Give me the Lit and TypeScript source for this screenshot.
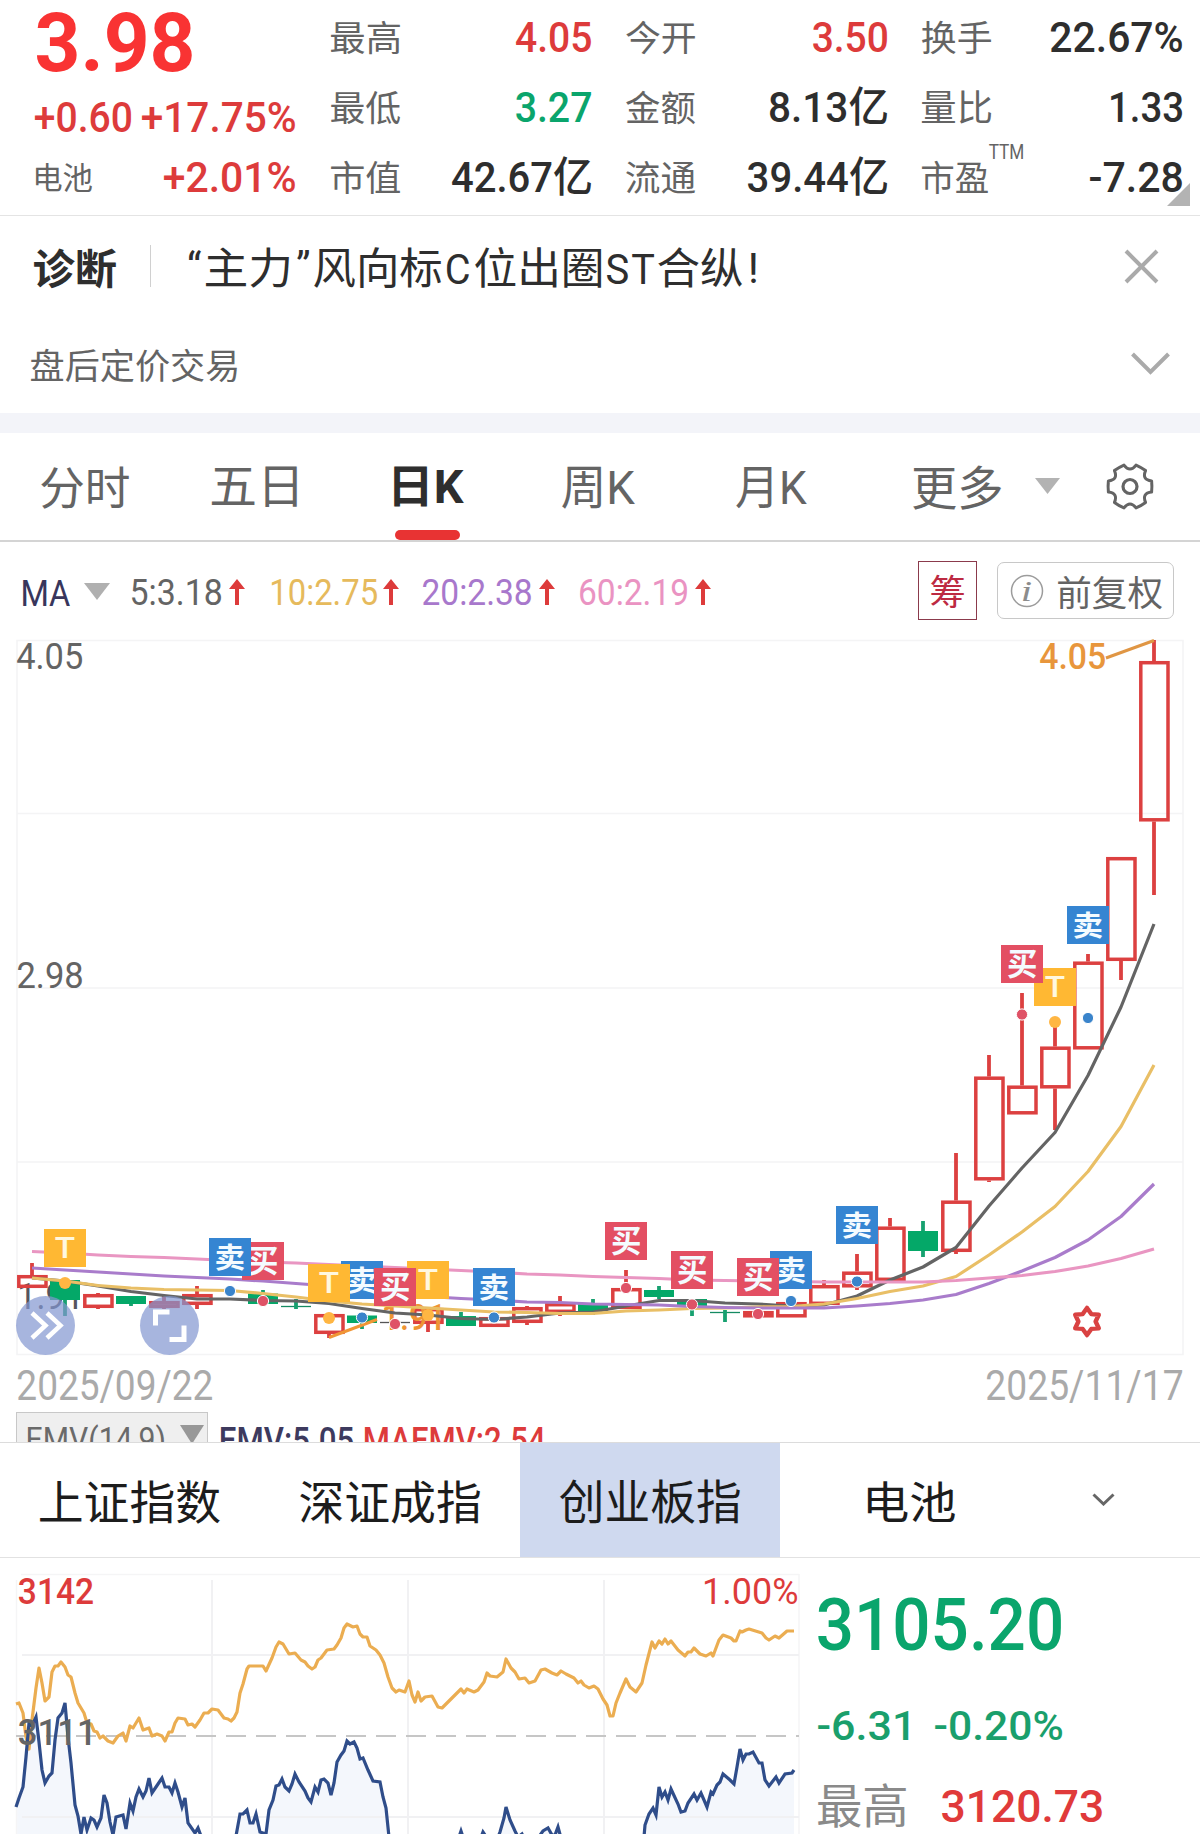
import { LitElement, html, svg, css, nothing } from "lit";
import { customElement, property } from "lit/decorators.js";

const LATIN = 'Roboto, "Noto Sans CJK SC", sans-serif';
const RED = "#dd3b3b";
const GREEN = "#0aa56c";
const DARK = "#2e2e2e";
const GRAY = "#646464";

/* ---- condensed lettering: text scaled so that its ink fills a w x h box ---- */

const ctx = document.createElement("canvas").getContext("2d")!;

function inkText(text: string, x: number, y: number, w: number, h: number, fill: string, weight = 400, style = "normal", family = LATIN) {
  ctx.font = `${style} ${weight} 200px ${family}`;
  const m = ctx.measureText(text);
  const size = (h / (m.actualBoundingBoxAscent + m.actualBoundingBoxDescent)) * 200;
  const k = size / 200;
  const sx = w / ((m.actualBoundingBoxLeft + m.actualBoundingBoxRight) * k);
  const tx = x + m.actualBoundingBoxLeft * k * sx;
  const ty = y + m.actualBoundingBoxAscent * k;
  return svg`<text transform="translate(${tx.toFixed(2)} ${ty.toFixed(2)}) scale(${sx.toFixed(4)} 1)"
    font-family=${family} font-size=${size.toFixed(2)} font-weight=${weight} font-style=${style} fill=${fill} xml:space="preserve">${text}</text>`;
}

@customElement("fit-text")
export class FitText extends LitElement {
  @property() text = "";
  @property({ type: Number }) w = 10;
  @property({ type: Number }) h = 10;
  @property() color = GRAY;
  @property({ type: Number }) weight = 400;

  static styles = css`
    :host { display: block; flex: none; }
    .box { display: block; overflow: visible; }
  `;

  render() {
    return html`<svg class="box" width=${this.w} height=${this.h}>
      ${inkText(this.text, 0, 0, this.w, this.h, this.color, this.weight)}
    </svg>`;
  }
}

const fit = (text: string, w: number, h: number, color = GRAY, weight = 400, cls = "") =>
  html`<fit-text class=${cls} .text=${text} .w=${w} .h=${h} .color=${color} .weight=${weight}></fit-text>`;

/* ------------------------------ quote header ------------------------------ */

type Stat = { label: string; lw?: number; value: string; w: number; color?: string; yi?: boolean; ttm?: boolean };

const STATS: Stat[][] = [
  [
    { label: "最高", value: "4.05", w: 75, color: RED },
    { label: "最低", value: "3.27", w: 75, color: GREEN },
    { label: "市值", value: "42.67亿", w: 139, yi: true },
  ],
  [
    { label: "今开", value: "3.50", w: 74, color: RED },
    { label: "金额", value: "8.13亿", w: 117, yi: true },
    { label: "流通", value: "39.44亿", w: 139, yi: true },
  ],
  [
    { label: "换手", value: "22.67%", w: 131 },
    { label: "量比", value: "1.33", w: 71 },
    { label: "市盈", lw: 66, value: "-7.28", w: 92, ttm: true },
  ],
];

@customElement("quote-header")
export class QuoteHeader extends LitElement {
  static styles = css`
    :host { display: block; }
    .head { position: relative; box-sizing: border-box; height: 216px; padding: 11px 18px 0 35px; display: grid;
      grid-template-columns: 296px 295px 296px 260px; border-bottom: 1px solid #e4e4e4; }
    .left { display: flex; flex-direction: column; padding-right: 36px; }
    .line { display: flex; justify-content: space-between; height: 31px; margin-top: 29px; }
    .price { margin-left: 1.5px; }
    .sector { margin: 2px 0 0 1px; }
    .col { padding: 10px 35px 0 0; }
    .col:last-of-type { padding-right: 0; }
    .row { height: 70px; display: flex; align-items: flex-start; }
    .val { margin-left: auto; }
    .yi { margin-left: auto; margin-top: -5px; }
    .ttm { margin: -16px 0 0 1px; }
    .corner { position: absolute; left: 1167px; top: 183px; }
  `;
  render() {
    return html`<div class="head">
      <div class="left">
        ${fit("3.98", 155, 61, "#f93333", 700, "price")}
        <div class="line">${fit("+0.60", 96, 31, RED, 500)}${fit("+17.75%", 153, 31, RED, 500)}</div>
        <div class="line">${fit("电池", 56, 28, GRAY, 400, "sector")}${fit("+2.01%", 131, 31, RED, 500)}</div>
      </div>
      ${STATS.map((c) => html`<div class="col">
        ${c.map((s) => html`<div class="row">
          ${fit(s.label, s.lw ?? 69, 33)}
          ${s.ttm ? fit("TTM", 34, 14, GRAY, 400, "ttm") : nothing}
          ${fit(s.value, s.w, s.yi ? 39.5 : 31, s.color ?? DARK, 500, s.yi ? "yi" : "val")}
        </div>`)}
      </div>`)}
      <svg class="corner" width="23" height="23"><path d="M23 0V23H0Z" fill="#b3b3b3"/></svg>
    </div>`;
  }
}

/* ------------------------------- notice rows ------------------------------ */

@customElement("notice-rows")
export class NoticeRows extends LitElement {
  static styles = css`
    :host { display: block; }
    .diag { box-sizing: border-box; height: 104px; display: flex; align-items: center; padding: 0 41px 0 34px; }
    .bar { width: 1px; height: 42px; background: #d0d0d0; margin: -4px 37px 0 34px; }
    .after { height: 93px; display: flex; align-items: center; padding: 0 30px 2px 31px; box-sizing: border-box; }
    .msg { display: flex; align-items: center; }
    .q1 { margin: -27px 5px 0 1px; }
    .q2 { margin: -27px 5px 0 8px; }
    .lat { margin: 1px 6px 0 6px; }
    .s { margin: 1px 4px 0 6px; }
    .t { margin: 1px 4px 0 0; }
    .bang { margin-left: 9px; }
    .x { margin: -3px 0 0 auto; }
    .v { margin: -4px 0 0 auto; }
    .band { height: 20px; background: #f3f4f9; }
  `;
  render() {
    return html`
      <div class="diag">
        ${fit("诊断", 82, 40, DARK, 700)}
        <div class="bar"></div>
        <div class="msg">
          ${fit("“", 12, 10, DARK, 400, "q1")}${fit("主力", 83, 40, DARK)}${fit("”", 12, 10, DARK, 400, "q2")}
          ${fit("风向标", 127, 40, DARK)}${fit("C", 22, 31, DARK, 400, "lat")}${fit("位出圈", 126, 40, DARK)}
          ${fit("S", 21, 31, DARK, 400, "s")}${fit("T", 22, 30, DARK, 400, "t")}${fit("合纵", 84, 40, DARK)}
          ${fit("!", 5, 30, DARK, 400, "bang")}
        </div>
        <svg class="x" width="35" height="35"><path d="M2 2L33 33M33 2L2 33" stroke="#aaa" stroke-width="4"/></svg>
      </div>
      <div class="after">
        ${fit("盘后定价交易", 206, 33)}
        <svg class="v" width="39" height="23"><path d="M1.5 2L19.5 20L37.5 2" fill="none" stroke="#aaa" stroke-width="4"/></svg>
      </div>
      <div class="band"></div>`;
  }
}

/* ------------------------------- period tabs ------------------------------ */

function gearPath(cx: number, cy: number) {
  let d = "";
  for (let i = 0; i < 6; i++) {
    const a = (Math.PI / 3) * i;
    const p = (r: number, o: number) => `${(cx + r * Math.cos(a + o)).toFixed(2)} ${(cy + r * Math.sin(a + o)).toFixed(2)}`;
    d += `${i ? "L" : "M"}${p(22.3, -0.25)}Q${p(22.2, 0)} ${p(22.3, 0.25)}`;
    d += `Q${p(13.4, Math.PI / 6)} ${p(22.3, Math.PI / 3 - 0.25)}`;
  }
  return d + "Z";
}

@customElement("period-tabs")
export class PeriodTabs extends LitElement {
  static styles = css`
    :host { display: block; }
    .tabs { box-sizing: border-box; height: 109px; display: flex; align-items: flex-start; padding: 34px 40px 0 41px; border-bottom: 2px solid #d4d4d4; }
    .g1 { margin-left: 83px; } .g2 { margin-left: 97px; } .g3 { margin-left: 98px; } .g4 { margin-left: 101px; } .g5 { margin: -1px 0 0 106px; }
    .on { display: flex; flex-direction: column; height: 73px; }
    .ul { margin: auto 0 0 1px; width: 65px; height: 10px; border-radius: 5px; background: #e83333; }
    .tri { margin: 11px 0 0 34px; }
    .gear { margin: -5px 0 0 45px; }
  `;
  render() {
    return html`<div class="tabs">
      ${fit("分时", 88, 42)}
      ${fit("五日", 85, 40, GRAY, 400, "g1")}
      <div class="on g2">${fit("日K", 70, 40, DARK, 700)}<div class="ul"></div></div>
      ${fit("周K", 73, 41, GRAY, 400, "g3")}
      ${fit("月K", 71, 41, GRAY, 400, "g4")}
      ${fit("更多", 88, 43, GRAY, 400, "g5")}
      <svg class="tri" width="25" height="16"><path d="M0 0H25L12.5 16Z" fill="#b3b3b3"/></svg>
      <svg class="gear" width="50" height="50">
        <path d=${gearPath(25, 24.5)} fill="none" stroke="#646464" stroke-width="3" stroke-linejoin="round"/>
        <circle cx="25" cy="24.5" r="7" fill="none" stroke="#646464" stroke-width="3.2"/>
      </svg>
    </div>`;
  }
}

/* ------------------------------- MA legend row ---------------------------- */

const LEGEND = [
  { t: "5:3.18", w: 89, c: GRAY, gap: 22, a: 8 },
  { t: "10:2.75", w: 105, c: "#e6ba5c", gap: 27, a: 6 },
  { t: "20:2.38", w: 108, c: "#a878cc", gap: 24, a: 8 },
  { t: "60:2.19", w: 107, c: "#ea93c2", gap: 25, a: 8 },
];

@customElement("ma-legend")
export class MaLegend extends LitElement {
  static styles = css`
    :host { display: block; }
    .row { box-sizing: border-box; height: 88px; padding: 0 26px 0 23px; display: flex; align-items: flex-start; }
    .ma { margin-top: 38px; }
    .tri { margin: 41px 0 0 14px; }
    .num { margin-top: 36px; }
    .arrow { margin-top: 37px; }
    .chou { box-sizing: border-box; width: 59px; height: 59px; margin: 19px 0 0 auto; border: 1px solid #8b3a4c; display: flex; align-items: center; justify-content: center; padding-top: 2px; }
    .adj { box-sizing: border-box; width: 177px; height: 57px; margin: 20px 0 0 20px; border: 1px solid #c8c8c8; border-radius: 7px; display: flex; align-items: center; justify-content: space-between; padding: 0 11px 0 12px; }
    .fq { margin-top: 3px; }
  `;
  render() {
    return html`<div class="row">
      ${fit("MA", 47, 26, "#38365c", 400, "ma")}
      <svg class="tri" width="26" height="17"><path d="M0 0H26L13 17Z" fill="#b0b0b0"/></svg>
      ${LEGEND.map((l) => html`
        <div style="margin-left:${l.gap}px">${fit(l.t, l.w, 27, l.c, 450, "num")}</div>
        <svg class="arrow" style="margin-left:${l.a}px" width="16" height="26"><path d="M8 0L16 10H10V26H6V10H0Z" fill=${RED}/></svg>`)}
      <div class="chou">${fit("筹", 33, 33, "#bd2a42")}</div>
      <div class="adj">
        <svg width="34" height="34"><circle cx="17" cy="17" r="15.5" fill="none" stroke="#9c9c9c" stroke-width="1.5"/>
          ${inkText("i", 13, 7.5, 8, 19, "#8c8c8c", 400, "italic", '"Liberation Serif", serif')}</svg>
        ${fit("前复权", 104, 33, GRAY, 400, "fq")}
      </div>
    </div>`;
  }
}

/* ------------------------------- candle chart ----------------------------- */

// [kind, high, top, bottom, low] in chart units; kind: 1 red, 0 green, 2 flat green, 3 flat gray
const CANDLES: (number[] | null)[] = [
  [1, 1263, 1275, 1288, 1288], [0, 1280, 1280, 1300, 1316], [1, 1293, 1294, 1308, 1309], [0, 1296, 1296, 1304, 1306],
  [1, 1296, 1301, 1308, 1309], [1, 1286, 1294, 1305, 1309], null, [0, 1290, 1293.5, 1304, 1304],
  [2, 1299, 1306.5, 1306.5, 1309], [1, 1314, 1314, 1334, 1338], [0, 1315.5, 1315.5, 1323, 1329], [3, 1322.5, 1322.5, 1322.5, 1322.5],
  [1, 1308, 1308, 1324, 1332], [0, 1312, 1316, 1326, 1326], [1, 1317, 1317, 1327, 1327], [1, 1306, 1307, 1323, 1325],
  [1, 1296, 1303, 1313, 1316], [0, 1299, 1304, 1311, 1315], [1, 1270, 1288, 1309, 1309], [0, 1286, 1290, 1297, 1299],
  [0, 1299, 1299, 1306, 1316], [2, 1310, 1312.5, 1312.5, 1322], [1, 1311, 1311, 1317.5, 1317.5], [1, 1302, 1302, 1317.5, 1317.5],
  [1, 1280, 1285, 1305, 1305], [1, 1254, 1271.5, 1287.5, 1290], [1, 1218, 1226.5, 1281, 1281], [0, 1221, 1231, 1251, 1257],
  [1, 1153, 1200.5, 1252, 1254], [1, 1055, 1076.5, 1180.5, 1182], [1, 993, 1085.5, 1114.5, 1114.5], [1, 1022, 1046.5, 1088.5, 1130],
  [1, 954, 961.5, 1049.5, 1049.5], [1, 857, 857, 961, 980], [1, 640, 661, 821.5, 895],
];

const MA5 = [1278, 1281, 1286, 1291.5, 1295.5, 1299, 1299, 1300.5, 1301, 1303.5, 1308.5, 1313, 1315, 1318.5, 1319.5, 1317, 1313, 1312, 1306, 1300.5, 1300.5, 1303, 1304, 1306, 1305, 1296, 1280, 1267, 1247.5, 1206, 1168, 1132.5, 1075.5, 1007, 924];
const MA10 = [1278, 1281, 1285.5, 1288, 1289.5, 1290, 1290.5, 1293.5, 1297, 1301, 1304, 1306, 1308, 1310, 1312, 1312.5, 1313.5, 1313.5, 1311, 1310, 1308.5, 1308, 1307, 1306.5, 1304, 1298.5, 1291.5, 1286, 1276.5, 1255, 1232, 1206.5, 1171.5, 1126.5, 1065];
const MA20 = [1268, 1270, 1272, 1274, 1276, 1277.5, 1279, 1281, 1283.5, 1286, 1289, 1292.5, 1296.5, 1298.5, 1300, 1302, 1302.5, 1304, 1304.5, 1305, 1306.5, 1307.5, 1308, 1308, 1308, 1306, 1303.5, 1300, 1294.5, 1283.5, 1271, 1257.5, 1240, 1216.5, 1184];
const MA60 = [1251.5, 1253, 1255, 1256.5, 1257.5, 1259, 1260.5, 1262, 1263, 1264.5, 1266, 1267.5, 1269, 1270.5, 1272, 1274, 1275, 1276.5, 1277.5, 1278.5, 1280, 1280.5, 1281, 1281.5, 1282, 1282, 1282, 1282, 1280.5, 1278, 1275.5, 1271.5, 1266, 1258.5, 1249];

const cxOf = (i: number) => 32 + 33 * i;
const linePts = (a: number[]) => a.map((y, i) => `${cxOf(i)},${y}`).join(" ");

const DOTS: [number, number, string][] = [
  [1, 1283, "T"], [6, 1291, "卖"], [7, 1301, "买"], [9, 1318, "T"], [10, 1317.5, "卖"], [11, 1324, "买"], [12, 1315, "T"], [14, 1317.5, "卖"],
  [18, 1288, "买"], [20, 1304.5, "买"], [22, 1314, "买"], [23, 1301, "卖"], [25, 1281.5, "卖"], [30, 1014.5, "买"], [31, 1022, "T"], [32, 1018, "卖"],
];
const FLAGS: [number, number, string][] = [
  [1, 1229, "T"], [7, 1242, "买"], [6, 1238, "卖"], [10, 1261, "卖"], [9, 1264, "T"], [12, 1261, "T"], [11, 1268, "买"], [14, 1268, "卖"],
  [18, 1222, "买"], [20, 1251, "买"], [23, 1251, "卖"], [22, 1258, "买"], [25, 1206, "卖"], [31, 968, "T"], [30, 945, "买"], [32, 906, "卖"],
];
const FLAG_COLOR: Record<string, string> = { T: "#ffb833", 卖: "#3585d2", 买: "#e34f63" };
const DOT_COLOR: Record<string, string> = { T: "#ffb643", 卖: "#3a84cb", 买: "#df5266" };

@customElement("candle-chart")
export class CandleChart extends LitElement {
  static styles = css`
    :host { display: block; }
    .chart { display: block; }
  `;

  private candle(c: number[] | null, i: number) {
    if (!c) return nothing;
    const [k, hi, top, bot, lo] = c;
    const x = cxOf(i);
    if (k === 2) return svg`<path d="M${x - 15} ${top}H${x + 15}" stroke="#148a62" stroke-width="1.3"/><path d="M${x} ${hi}V${lo}" stroke="#17a170" stroke-width="3.8"/>`;
    if (k === 3) return svg`<path d="M${x - 15} ${top}H${x + 15}" stroke="#555" stroke-width="1.3"/>`;
    if (k === 0) return svg`<path d="M${x} ${hi}V${lo}" stroke="#17a170" stroke-width="3.8"/><rect x=${x - 15} y=${top} width="30" height=${bot - top} fill="#04a868"/>`;
    return svg`<path d="M${x} ${hi}V${top}M${x} ${bot}V${lo}" stroke="#dc4040" stroke-width="3.8"/>
      <rect x=${x - 13.2} y=${top + 1.7} width="27.2" height=${bot - top - 3.4} fill="none" stroke="#dc4040" stroke-width="3.5"/>`;
  }

  private star(cx: number, cy: number) {
    const p = Array.from({ length: 12 }, (_, i) => {
      const r = i % 2 ? 8.6 : 13.6;
      const a = (Math.PI / 6) * i - Math.PI / 2;
      return `${(cx + r * Math.cos(a)).toFixed(1)},${(cy + r * Math.sin(a)).toFixed(1)}`;
    }).join(" ");
    return svg`<polygon points=${p} fill="#fff" stroke="#d94242" stroke-width="4.4" stroke-linejoin="round"/>`;
  }

  render() {
    const line = (a: number[], c: string) => svg`<polyline points=${linePts(a)} fill="none" stroke=${c} stroke-width="3.2" stroke-linejoin="round"/>`;
    return html`<svg class="chart" width="1200" height="730" viewBox="0 630 1200 730">
      <path d="M17 640.5H1183V1354.5H17ZM17 813.5H1183M17 988H1183M17 1162H1183" fill="none" stroke="#f4f4f5" stroke-width="1.6"/>
      ${inkText("4.05", 17, 642, 65, 27, GRAY, 450)}
      ${inkText("2.98", 18, 961.5, 64, 27, GRAY, 450)}
      ${inkText("1.91", 20, 1282, 57, 27, "#55555e", 450)}
      ${CANDLES.map((c, i) => this.candle(c, i))}
      ${inkText("1.91", 384, 1303, 56, 27, "#ee9433", 500)}
      <path d="M329 1337.5L377 1319.5" stroke="#f09636" stroke-width="3"/>
      ${inkText("4.05", 1040, 642, 65, 27, "#e8963c", 500)}
      <path d="M1106 658L1154 640.5" stroke="#e09644" stroke-width="3"/>
      ${line(MA5, "#646464")}${line(MA10, "#e9bf66")}${line(MA20, "#a97ccb")}${line(MA60, "#e996c2")}
      ${DOTS.map(([i, y, t]) => svg`<circle cx=${cxOf(i)} cy=${y} r=${t === "T" ? 6 : 5.6} fill=${DOT_COLOR[t]} stroke=${t === "T" ? "none" : "#fff"} stroke-width="1"/>`)}
      ${FLAGS.map(([i, y, t]) => svg`<rect x=${cxOf(i) - 21} y=${y} width="42" height="38" fill=${FLAG_COLOR[t]}/>
        ${t === "T" ? inkText("T", cxOf(i) - 9.5, y + 8, 19, 21, "#fff8e0", 500) : inkText(t, cxOf(i) - 14, y + 5, 28, 27.5, "#f4fbff", 700)}`)}
      <circle cx="45.5" cy="1325.5" r="29.5" fill="rgb(130 150 208 / .7)"/>
      <path d="M32 1313L45.5 1325.5L32 1338M47 1313L60.5 1325.5L47 1338" fill="none" stroke="#fff" stroke-width="4.5"/>
      <circle cx="169.5" cy="1325.5" r="29.5" fill="rgb(130 150 208 / .7)"/>
      <path d="M155.5 1325.5V1312H169.5M184 1325.5V1339.5H169.5" fill="none" stroke="#fff" stroke-width="5"/>
      ${this.star(1087, 1321.5)}
    </svg>`;
  }
}

/* --------------------------- dates and indicator -------------------------- */

@customElement("chart-footer")
export class ChartFooter extends LitElement {
  static styles = css`
    :host { display: block; }
    .dates { box-sizing: border-box; height: 52px; display: flex; justify-content: space-between; padding: 10px 18px 0 18px; }
    .ind { height: 30px; overflow: hidden; display: flex; align-items: flex-start; padding-left: 16px; }
    .sel { box-sizing: border-box; width: 192px; height: 48px; flex: none; border: 1px solid #c8c8c8; background: #efefef; display: flex; padding: 12px 3px 0 11px; justify-content: space-between; }
    .a { margin: 14px 0 0 13px; }
    .b { margin: 14px 0 0 12px; }
  `;
  render() {
    return html`
      <div class="dates">${fit("2025/09/22", 194, 33, "#aaa", 450)}${fit("2025/11/17", 195, 33, "#aaa", 450)}</div>
      <div class="ind">
        <div class="sel">${fit("EMV(14,9)", 136, 34, "#6a6a6a")}<svg width="24" height="20"><path d="M0 0H24L12 19Z" fill="#989898"/></svg></div>
        ${fit("EMV:5.05", 132, 27, "#3d3a5e", 500, "a")}
        ${fit("MAEMV:2.54", 180, 27, RED, 500, "b")}
      </div>`;
  }
}

/* -------------------------------- index tabs ------------------------------ */

@customElement("index-tabs")
export class IndexTabs extends LitElement {
  static styles = css`
    :host { display: block; }
    .bar { box-sizing: border-box; height: 116px; border-top: 1px solid #dcdcdc; border-bottom: 1px solid #e2e2e2; display: grid; grid-template-columns: 260px 260px 260px 263px 1fr; }
    .tab { display: flex; align-items: center; justify-content: center; }
    .in { margin-top: 3px; }
    .on { background: #cfd9ef; }
    .more { display: flex; align-items: center; padding: 0 0 2px 49px; }
  `;
  render() {
    const ink = "#1c1c1c";
    return html`<div class="bar">
      <div class="tab">${fit("上证指数", 180, 43, ink, 400, "in")}</div>
      <div class="tab">${fit("深证成指", 180, 43, ink, 400, "in")}</div>
      <div class="tab on">${fit("创业板指", 180, 43, ink, 400, "in")}</div>
      <div class="tab">${fit("电池", 87, 41, ink, 400, "in")}</div>
      <div class="more"><svg width="23" height="13"><path d="M1.5 1.5L11.5 11L21.5 1.5" fill="none" stroke="#666" stroke-width="3"/></svg></div>
    </div>`;
  }
}

/* ------------------------------- index panel ------------------------------ */

const AVG = "16,1704 19,1703 23,1713 26,1737 29,1749 32,1720 36,1688 39,1668 42,1683 45,1701 49,1697 52,1672 55,1666 58,1666 61,1662 65,1667 68,1675 71,1677 75,1693 78,1703 84,1713 87,1723 91,1724 94,1731 97,1732 100,1738 103,1736 108,1741 113,1743 118,1736 123,1733 126,1741 130,1726 133,1728 139,1718 143,1730 149,1728 152,1736 157,1734 162,1736 165,1741 169,1732 172,1732 175,1723 178,1718 185,1719 188,1725 192,1724 195,1727 200,1720 204,1713 208,1713 212,1709 218,1710 224,1718 228,1719 231,1721 234,1718 237,1712 240,1693 243,1684 247,1669 249,1666 263,1666 266,1671 272,1658 276,1647 279,1642 283,1644 289,1654 295,1653 301,1660 305,1662 308,1666 312,1669 315,1667 318,1660 321,1658 327,1650 334,1649 337,1645 341,1638 344,1628 347,1624 353,1627 357,1626 360,1634 363,1637 367,1637 370,1646 376,1650 380,1655 384,1663 388,1677 392,1688 396,1692 399,1690 405,1692 409,1681 412,1695 415,1702 418,1692 421,1701 425,1697 432,1696 438,1707 442,1708 447,1703 455,1695 461,1689 464,1693 467,1689 474,1692 478,1690 484,1682 487,1673 490,1676 497,1677 503,1672 506,1659 511,1668 515,1672 519,1679 525,1678 529,1683 535,1681 541,1670 545,1669 552,1673 557,1675 561,1671 566,1674 574,1678 578,1683 581,1681 584,1685 589,1688 594,1686 598,1689 603,1699 607,1705 610,1716 613,1716 616,1703 620,1693 626,1679 630,1687 636,1692 642,1683 646,1665 652,1642 655,1648 659,1641 662,1644 665,1639 668,1644 671,1641 678,1650 685,1656 688,1652 691,1652 694,1648 700,1654 706,1656 711,1653 713,1656 719,1640 723,1635 731,1638 734,1641 736,1641 740,1631 742,1632 746,1630 749,1629 762,1633 766,1638 769,1640 775,1636 779,1638 787,1631 794,1631";
const PRICE = "16,1807 19,1798 23,1787 26,1757 29,1723 32,1726 36,1717 39,1742 42,1770 45,1783 49,1776 52,1773 55,1740 58,1718 62,1713 65,1703 68,1737 71,1763 75,1805 78,1816 81,1834 84,1817 87,1830 91,1818 94,1820 97,1827 101,1818 104,1795 107,1803 110,1822 113,1835 116,1817 123,1815 126,1829 130,1803 133,1811 136,1797 139,1789 143,1797 146,1791 149,1778 152,1793 156,1787 162,1778 165,1787 169,1787 172,1793 175,1783 178,1792 182,1807 185,1798 188,1823 195,1833 198,1828 201,1836 212,1850 228,1850 236,1836 240,1814 243,1814 247,1810 250,1823 253,1823 256,1814 260,1832 266,1834 269,1810 273,1800 276,1786 279,1785 282,1779 285,1787 289,1791 292,1784 295,1774 299,1782 305,1791 308,1798 311,1802 315,1787 318,1792 321,1780 324,1779 328,1783 331,1795 334,1783 337,1762 341,1755 344,1751 347,1741 350,1744 354,1742 357,1748 360,1759 363,1758 368,1770 373,1781 380,1782 383,1797 386,1808 389,1837 395,1850 455,1850 458,1840 461,1831 465,1843 479,1843 483,1832 487,1838 497,1840 500,1832 504,1818 506,1807 510,1820 515,1831 518,1837 522,1834 526,1842 538,1838 543,1831 548,1828 552,1835 555,1835 558,1827 561,1838 566,1850 642,1850 644,1837 645,1825 649,1814 653,1808 656,1815 659,1787 662,1797 665,1792 668,1800 671,1789 678,1804 681,1812 685,1811 688,1803 694,1794 697,1800 701,1793 707,1807 711,1792 713,1794 717,1785 720,1782 723,1774 730,1780 734,1784 737,1767 740,1749 743,1760 746,1754 749,1754 753,1752 759,1763 762,1763 765,1780 769,1786 776,1777 779,1783 785,1774 792,1773 794,1770";

@customElement("index-panel")
export class IndexPanel extends LitElement {
  static styles = css`
    :host { display: block; }
    .panel { height: 276px; display: flex; overflow: hidden; }
    .chart { display: block; flex: none; }
    .side { padding: 40px 0 0 18px; }
    .chg { display: flex; gap: 27px; margin-top: 59px; }
    .hi { display: flex; align-items: center; gap: 36px; margin-top: 43px; }
  `;
  render() {
    return html`<div class="panel">
      <svg class="chart" width="800" height="276" viewBox="0 1558 800 276">
        <polygon points="${PRICE} 794,1850 16,1850" fill="#f4f7fc"/>
        <path d="M21 1574.5H799M16.5 1580V1834M799 1574V1834" stroke="#f5f5f6" stroke-width="1.5"/>
        <path d="M212 1580V1834M408 1580V1834M604 1580V1834M22 1655H799M22 1817H799" stroke="#f1f1f3" stroke-width="2"/>
        <path d="M16 1736H799" stroke="#c6c6c6" stroke-width="2" stroke-dasharray="20 10"/>
        <polyline points=${AVG} fill="none" stroke="#ebad51" stroke-width="3.2" stroke-linejoin="round"/>
        <polyline points=${PRICE} fill="none" stroke="#2f4d8a" stroke-width="3.2"/>
        ${inkText("3142", 19, 1577, 74, 27, RED, 500)}
        ${inkText("3111", 19, 1718, 71, 27, GRAY, 500)}
        ${inkText("1.00%", 705, 1577, 92, 27, RED, 450)}
      </svg>
      <div class="side">
        ${fit("3105.20", 243, 53, GREEN, 500)}
        <div class="chg">${fit("-6.31", 90, 30.5, "#1a9f6c", 500)}${fit("-0.20%", 127, 30.5, "#1a9f6c", 500)}</div>
        <div class="hi">${fit("最高", 88, 43, "#8a8a8a")}${fit("3120.73", 160, 33, "#e03a3a", 500)}</div>
      </div>
    </div>`;
  }
}

@customElement("app-root")
export class AppRoot extends LitElement {
  static styles = css`
    :host { display: block; width: 1200px; height: 1834px; overflow: hidden; background: #fff; font-family: Roboto, "Noto Sans CJK SC", sans-serif; }
  `;
  render() {
    return html`
      <quote-header></quote-header>
      <notice-rows></notice-rows>
      <period-tabs></period-tabs>
      <ma-legend></ma-legend>
      <candle-chart></candle-chart>
      <chart-footer></chart-footer>
      <index-tabs></index-tabs>
      <index-panel></index-panel>`;
  }
}
